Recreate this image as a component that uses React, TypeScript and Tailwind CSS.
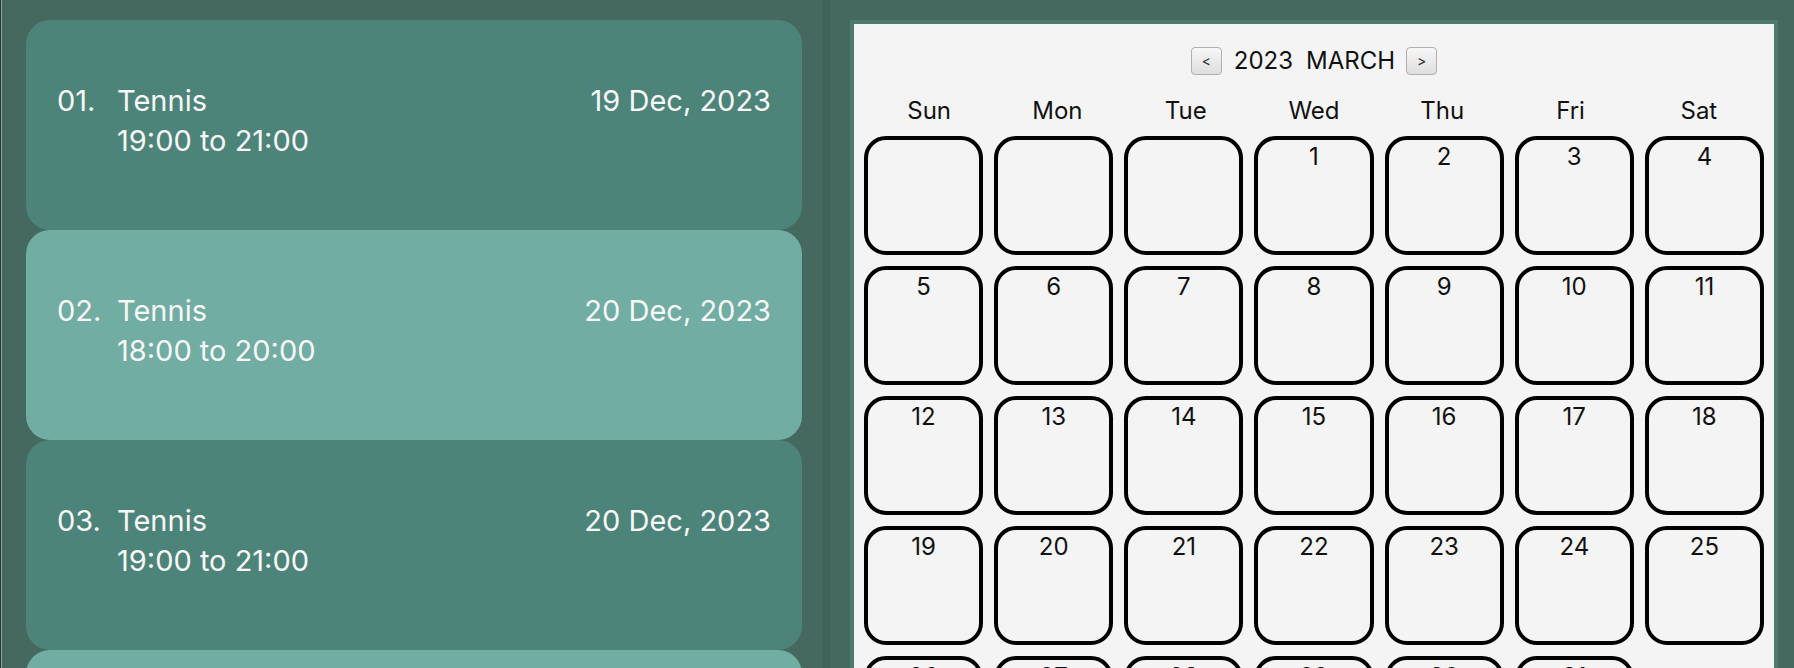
import React from "react";

type Booking = { no: string; title: string; time: string; date: string };

const bookings: Booking[] = [
  { no: "01.", title: "Tennis", time: "19:00 to 21:00", date: "19 Dec, 2023" },
  { no: "02.", title: "Tennis", time: "18:00 to 20:00", date: "20 Dec, 2023" },
  { no: "03.", title: "Tennis", time: "19:00 to 21:00", date: "20 Dec, 2023" },
  { no: "04.", title: "Tennis", time: "18:00 to 20:00", date: "21 Dec, 2023" },
];

const days = ["Sun", "Mon", "Tue", "Wed", "Thu", "Fri", "Sat"];

// March 2023 starts on a Wednesday
const cells: (number | null)[] = [
  null,
  null,
  null,
  ...Array.from({ length: 31 }, (_, i) => i + 1),
];

const BookingCard: React.FC<{ b: Booking; light: boolean }> = ({ b, light }) => (
  <div
    className={`h-[210px] shrink-0 rounded-[24px] px-[31px] pt-[61px] text-[29px] leading-[40px] text-[#f7f7f7] ${
      light ? "bg-[#71ada2]" : "bg-[#4d8479]"
    }`}
  >
    <div className="flex justify-between">
      <div className="flex">
        <span className="w-[60px]">{b.no}</span>
        <div>
          <div>{b.title}</div>
          <div>{b.time}</div>
        </div>
      </div>
      <span>{b.date}</span>
    </div>
  </div>
);

const NavButton: React.FC<{ label: string }> = ({ label }) => (
  <button className="flex h-[28px] w-[31px] items-center justify-center rounded-[4px] border border-[#b0b0b0] bg-gradient-to-b from-[#f7f7f7] to-[#dedede] text-[14px] leading-none text-[#333]">
    {label}
  </button>
);

export default function App() {
  return (
    <div
      className="flex h-[668px] w-[1794px] overflow-hidden bg-[#46695f]"
      style={{ fontFamily: "Inter, 'Liberation Sans', sans-serif" }}
    >
      {/* booking list */}
      <div className="flex w-[822px] shrink-0">
        <div className="w-[1px] bg-[#2e3532]" />
        <div className="w-[1px] bg-[#8fa39d]" />
        <div className="flex flex-1 flex-col pl-[24px] pr-[20px] pt-[20px]">
          {bookings.map((b, i) => (
            <BookingCard key={i} b={b} light={i % 2 === 1} />
          ))}
        </div>
      </div>

      {/* split divider */}
      <div className="w-[8px] shrink-0 bg-[#3f6259]" />

      {/* calendar */}
      <div className="flex-1 pl-[20px] pr-[16px] pt-[20px]">
        <div className="h-[700px] border-[4px] border-[#4f786e] bg-[#f4f4f4] text-[#111]">
          <div className="mt-[23px] flex h-[28px] items-center justify-center text-[24px]">
            <NavButton label="<" />
            <span className="ml-[12px]">2023</span>
            <span className="ml-[13px]">MARCH</span>
            <span className="ml-[11px]">
              <NavButton label=">" />
            </span>
          </div>

          <div className="mx-[11px] mt-[21px] grid h-[30px] grid-cols-7 text-[24px] leading-[30px]">
            {days.map((d) => (
              <div key={d} className="text-center">
                {d}
              </div>
            ))}
          </div>

          <div className="mx-[10px] mt-[10px] grid grid-cols-7 gap-x-[11px] gap-y-[11px]">
            {cells.map((n, i) => (
              <div
                key={i}
                className="h-[119px] rounded-[22px] border-[4px] border-black pt-[2px] text-center text-[24px] leading-[29px]"
              >
                {n ?? ""}
              </div>
            ))}
          </div>
        </div>
      </div>
    </div>
  );
}
